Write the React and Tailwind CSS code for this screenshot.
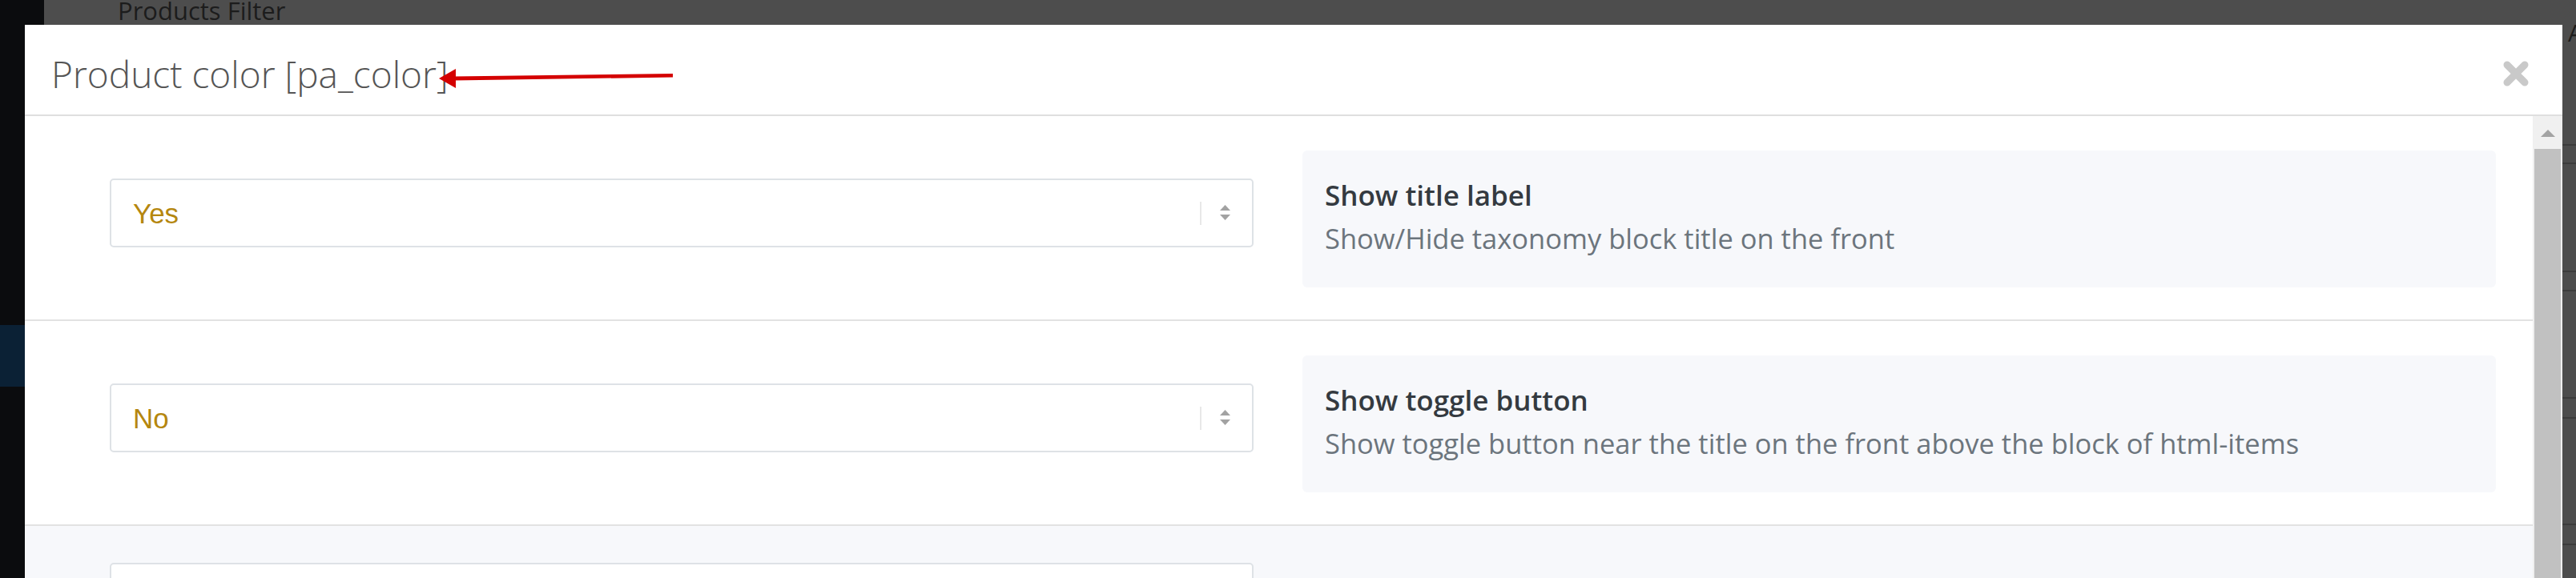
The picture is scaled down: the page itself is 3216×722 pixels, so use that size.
import React from "react";

const ROWS = [
  {
    value: "Yes",
    title: "Show title label",
    desc: "Show/Hide taxonomy block title on the front",
  },
  {
    value: "No",
    title: "Show toggle button",
    desc: "Show toggle button near the title on the front above the block of html-items",
  },
];

// thin darker lines of the page behind the modal, right edge
const STRIP_LINES = [180, 203, 338, 362, 496, 521, 654, 679];

const SelectBox = ({ value }) => (
  <div className="flex h-[86px] w-[1428px] items-center rounded-[5px] border-2 border-[#dee2e6] bg-white">
    <span className="flex-1 pl-[27px] font-['Liberation_Sans',Arial,sans-serif] text-[35px] leading-none text-[#b5870f]">
      {value}
    </span>
    <span className="h-[29px] w-[2px] bg-[#e8e8e8]" />
    <span className="flex w-[63px] justify-center pr-[5px]">
      <svg width="13" height="20" viewBox="0 0 13 20">
        <path d="M0 7 L6.5 0 L13 7 Z" fill="#a2a2a2" />
        <path d="M0 12 L6.5 19 L13 12 Z" fill="#a2a2a2" />
      </svg>
    </span>
  </div>
);

const OptionRow = ({ row, shaded }) => (
  <div
    className={`flex items-start pl-[106px] pr-[46px] ${
      shaded ? "bg-[#f7f8fb] pt-[46px] h-[120px]" : "border-b-2 border-[#e2e2e2] pt-[43px] pb-[40px]"
    }`}
  >
    <div className={shaded ? "" : "mt-[35px]"}>
      <SelectBox value={row.value} />
    </div>
    {!shaded && (
      <div className="ml-[61px] flex h-[171px] flex-1 flex-col rounded-[6px] bg-[#f7f8fb] px-[28px] pt-[32px]">
        <div className="text-[35px] font-semibold leading-[48px] text-[#343a40]">{row.title}</div>
        <div className="mt-[6px] text-[34.5px] leading-[48px] text-[#6c757d]">{row.desc}</div>
      </div>
    )}
  </div>
);

export default function App() {
  return (
    <div className="relative h-[722px] w-[3216px] overflow-hidden bg-[#4d4d4d] font-['Open_Sans','Noto_Sans',sans-serif]">
      {/* page behind the modal */}
      <div className="flex h-[31px] overflow-hidden">
        <div className="w-[55px] bg-[#0b0c0e]" />
        <div className="flex-1 bg-[#4d4d4d] pl-[92px]">
          <div className="-mt-[5px] text-[31px] leading-[36px] text-[#1c1c1c]">Products Filter</div>
        </div>
      </div>

      <div className="flex h-[691px]">
        <div className="w-[31px] bg-[#0b0c0e] pt-[375px]">
          <div className="h-[77px] bg-[#0b2135]" />
        </div>

        {/* modal */}
        <div className="flex w-[3168px] flex-col bg-white">
          <div className="flex h-[114px] shrink-0 items-center justify-between border-b-2 border-[#dfdfdf] pl-[33px] pr-[42px]">
            <h2 className="pt-[10px] text-[46px] font-light text-[#555]">Product color [pa_color]</h2>
            <svg width="32" height="32" viewBox="0 0 32 32" className="mt-[10px]">
              <path d="M5 5 L27 27 M27 5 L5 27" stroke="#c9c9c9" strokeWidth="9" strokeLinecap="round" />
            </svg>
          </div>

          <div className="flex min-h-0 flex-1">
            <div className="flex-1">
              {ROWS.map((row) => (
                <OptionRow key={row.value} row={row} />
              ))}
              <OptionRow row={{ value: "" }} shaded />
            </div>
            {/* scrollbar */}
            <div className="flex w-[37px] flex-col bg-[#f0f0f0] pt-[2px]">
              <div className="flex h-[39px] items-center justify-center">
                <svg width="18" height="9" viewBox="0 0 18 9">
                  <path d="M0 9 L9 0 L18 9 Z" fill="#a3a3a3" />
                </svg>
              </div>
              <div className="mx-[2px] flex-1 bg-[#c1c1c1]" />
            </div>
          </div>
        </div>

        <div className="relative w-[17px] bg-[#4d4d4d]">
          <div className="-mt-[8px] pl-[7px] text-[30px] leading-[36px] text-[#1c1c1c]">A</div>
          {STRIP_LINES.map((y) => (
            <div key={y} className="absolute left-0 right-0 h-[2px] bg-[#3c3c3c]" style={{ top: y - 31 }} />
          ))}
        </div>
      </div>

      {/* red annotation arrow */}
      <svg className="absolute left-[540px] top-[80px]" width="310" height="35" viewBox="540 80 310 35">
        <path d="M566 95.5 L840 92 L840 96.5 L566 100.5 Z" fill="#d40000" />
        <path d="M548 98 L569 86 L569 110 Z" fill="#d40000" />
      </svg>
    </div>
  );
}
